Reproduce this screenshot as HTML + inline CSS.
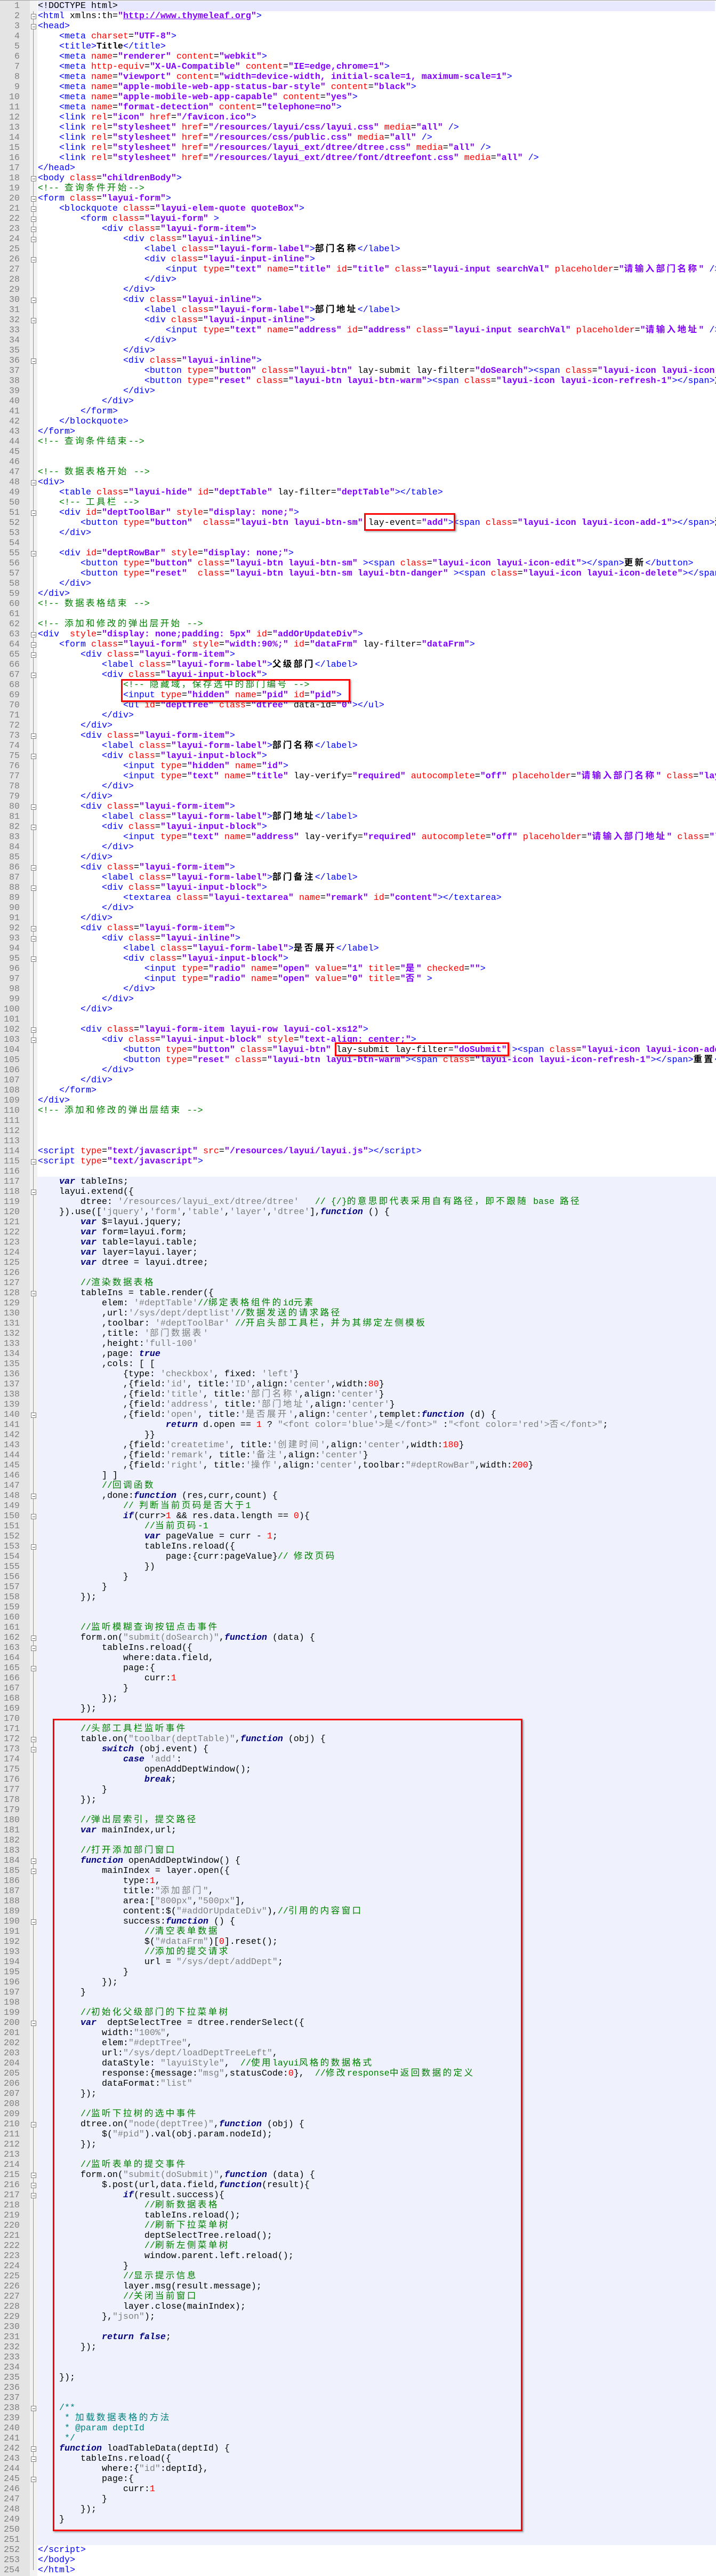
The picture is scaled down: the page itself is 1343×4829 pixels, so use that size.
<!DOCTYPE html>
<html><head><meta charset="utf-8"><style>
html,body{margin:0;padding:0;background:#fff}
body{width:1343px;height:4829px;position:relative;overflow:hidden;font-family:"Liberation Mono","Noto Sans CJK SC",monospace;font-size:16.67px}
#gut{position:absolute;left:0;top:0;width:56px;height:4829px;background:#e4e4e4}
#fold{position:absolute;left:56px;top:0;width:14px;height:4829px;background:#f2f2f2}
#topb{position:absolute;left:0;top:0;width:1343px;height:1px;background:#a0a0a0;z-index:5}
#hl{position:absolute;left:71px;top:2px;width:1270px;height:19px;background:#e8e8ff}
#jsbg{position:absolute;left:70px;top:2206px;width:1273px;height:2565px;background:#eff2fc}
#vl{position:absolute;left:62px;top:21px;width:1px;height:4797px;background:#909090}
.f{position:absolute;left:58px;width:8px;height:8px;border:1px solid #808080;background:#fff}
.f::after{content:"";position:absolute;left:2px;top:4px;width:5px;height:1px;background:#555}
#code{position:absolute;left:71px;top:2px;width:1272px;line-height:19px;color:#000;counter-reset:ln}
.l{height:19px;position:relative;counter-increment:ln;white-space:pre;overflow:visible}
.l::before{content:counter(ln);position:absolute;left:-71px;width:37px;text-align:right;color:#808080;font-weight:normal;font-style:normal}
xt{color:#0000ff}xa{color:#ff0000}xv{color:#8000ff;font-weight:bold}xc{color:#008000}
xk{color:#000080;font-weight:bold;font-style:italic}xs{color:#808080}xn{color:#ff0000}xd{color:#008080}xb{font-weight:bold}
z{letter-spacing:3.3px}
.rb{position:absolute;border:3px solid #f00;box-shadow:2px 2px 3px rgba(0,0,0,.35);box-sizing:border-box;z-index:4}
</style></head><body>
<div id="gut"></div><div id="fold"></div><div id="topb"></div><div id="hl"></div><div id="jsbg"></div><div id="vl"></div>
<div class="f" style="top:26px"></div><div class="f" style="top:45px"></div><div class="f" style="top:330px"></div><div class="f" style="top:368px"></div><div class="f" style="top:387px"></div><div class="f" style="top:406px"></div><div class="f" style="top:425px"></div><div class="f" style="top:444px"></div><div class="f" style="top:482px"></div><div class="f" style="top:558px"></div><div class="f" style="top:596px"></div><div class="f" style="top:672px"></div><div class="f" style="top:900px"></div><div class="f" style="top:957px"></div><div class="f" style="top:1033px"></div><div class="f" style="top:1185px"></div><div class="f" style="top:1204px"></div><div class="f" style="top:1223px"></div><div class="f" style="top:1261px"></div><div class="f" style="top:1375px"></div><div class="f" style="top:1413px"></div><div class="f" style="top:1508px"></div><div class="f" style="top:1546px"></div><div class="f" style="top:1622px"></div><div class="f" style="top:1660px"></div><div class="f" style="top:1736px"></div><div class="f" style="top:1755px"></div><div class="f" style="top:1793px"></div><div class="f" style="top:1926px"></div><div class="f" style="top:1945px"></div><div class="f" style="top:2173px"></div><div class="f" style="top:2230px"></div><div class="f" style="top:2420px"></div><div class="f" style="top:2648px"></div><div class="f" style="top:2800px"></div><div class="f" style="top:2838px"></div><div class="f" style="top:2895px"></div><div class="f" style="top:3066px"></div><div class="f" style="top:3085px"></div><div class="f" style="top:3123px"></div><div class="f" style="top:3256px"></div><div class="f" style="top:3275px"></div><div class="f" style="top:3484px"></div><div class="f" style="top:3503px"></div><div class="f" style="top:3598px"></div><div class="f" style="top:3788px"></div><div class="f" style="top:3978px"></div><div class="f" style="top:4073px"></div><div class="f" style="top:4092px"></div><div class="f" style="top:4111px"></div><div class="f" style="top:4510px"></div><div class="f" style="top:4586px"></div><div class="f" style="top:4605px"></div><div class="f" style="top:4643px"></div>
<div class="rb" style="left:683px;top:962px;width:171px;height:33px"></div>
<div class="rb" style="left:227px;top:1273px;width:430px;height:43px"></div>
<div class="rb" style="left:628px;top:1954px;width:327px;height:26px"></div>
<div class="rb" style="left:99px;top:3222px;width:881px;height:1523px"></div>
<div id="code"><div class="l">&lt;!DOCTYPE html&gt;</div><div class="l"><xt>&lt;html</xt> xmlns:th=<xv>"<u>http://www.thymeleaf.org</u>"</xv><xt>&gt;</xt></div><div class="l"><xt>&lt;head&gt;</xt></div><div class="l">    <xt>&lt;meta</xt> <xa>charset</xa>=<xv>"UTF-8"</xv><xt>&gt;</xt></div><div class="l">    <xt>&lt;title&gt;</xt><xb>Title</xb><xt>&lt;/title&gt;</xt></div><div class="l">    <xt>&lt;meta</xt> <xa>name</xa>=<xv>"renderer"</xv> <xa>content</xa>=<xv>"webkit"</xv><xt>&gt;</xt></div><div class="l">    <xt>&lt;meta</xt> <xa>http-equiv</xa>=<xv>"X-UA-Compatible"</xv> <xa>content</xa>=<xv>"IE=edge,chrome=1"</xv><xt>&gt;</xt></div><div class="l">    <xt>&lt;meta</xt> <xa>name</xa>=<xv>"viewport"</xv> <xa>content</xa>=<xv>"width=device-width, initial-scale=1, maximum-scale=1"</xv><xt>&gt;</xt></div><div class="l">    <xt>&lt;meta</xt> <xa>name</xa>=<xv>"apple-mobile-web-app-status-bar-style"</xv> <xa>content</xa>=<xv>"black"</xv><xt>&gt;</xt></div><div class="l">    <xt>&lt;meta</xt> <xa>name</xa>=<xv>"apple-mobile-web-app-capable"</xv> <xa>content</xa>=<xv>"yes"</xv><xt>&gt;</xt></div><div class="l">    <xt>&lt;meta</xt> <xa>name</xa>=<xv>"format-detection"</xv> <xa>content</xa>=<xv>"telephone=no"</xv><xt>&gt;</xt></div><div class="l">    <xt>&lt;link</xt> <xa>rel</xa>=<xv>"icon"</xv> <xa>href</xa>=<xv>"/favicon.ico"</xv><xt>&gt;</xt></div><div class="l">    <xt>&lt;link</xt> <xa>rel</xa>=<xv>"stylesheet"</xv> <xa>href</xa>=<xv>"/resources/layui/css/layui.css"</xv> <xa>media</xa>=<xv>"all"</xv> <xt>/&gt;</xt></div><div class="l">    <xt>&lt;link</xt> <xa>rel</xa>=<xv>"stylesheet"</xv> <xa>href</xa>=<xv>"/resources/css/public.css"</xv> <xa>media</xa>=<xv>"all"</xv> <xt>/&gt;</xt></div><div class="l">    <xt>&lt;link</xt> <xa>rel</xa>=<xv>"stylesheet"</xv> <xa>href</xa>=<xv>"/resources/layui_ext/dtree/dtree.css"</xv> <xa>media</xa>=<xv>"all"</xv> <xt>/&gt;</xt></div><div class="l">    <xt>&lt;link</xt> <xa>rel</xa>=<xv>"stylesheet"</xv> <xa>href</xa>=<xv>"/resources/layui_ext/dtree/font/dtreefont.css"</xv> <xa>media</xa>=<xv>"all"</xv> <xt>/&gt;</xt></div><div class="l"><xt>&lt;/head&gt;</xt></div><div class="l"><xt>&lt;body</xt> <xa>class</xa>=<xv>"childrenBody"</xv><xt>&gt;</xt></div><div class="l"><xc>&lt;!-- <z>查询条件开始</z>--&gt;</xc></div><div class="l"><xt>&lt;form</xt> <xa>class</xa>=<xv>"layui-form"</xv><xt>&gt;</xt></div><div class="l">    <xt>&lt;blockquote</xt> <xa>class</xa>=<xv>"layui-elem-quote quoteBox"</xv><xt>&gt;</xt></div><div class="l">        <xt>&lt;form</xt> <xa>class</xa>=<xv>"layui-form"</xv> <xt>&gt;</xt></div><div class="l">            <xt>&lt;div</xt> <xa>class</xa>=<xv>"layui-form-item"</xv><xt>&gt;</xt></div><div class="l">                <xt>&lt;div</xt> <xa>class</xa>=<xv>"layui-inline"</xv><xt>&gt;</xt></div><div class="l">                    <xt>&lt;label</xt> <xa>class</xa>=<xv>"layui-form-label"</xv><xt>&gt;</xt><xb><z>部门名称</z></xb><xt>&lt;/label&gt;</xt></div><div class="l">                    <xt>&lt;div</xt> <xa>class</xa>=<xv>"layui-input-inline"</xv><xt>&gt;</xt></div><div class="l">                        <xt>&lt;input</xt> <xa>type</xa>=<xv>"text"</xv> <xa>name</xa>=<xv>"title"</xv> <xa>id</xa>=<xv>"title"</xv> <xa>class</xa>=<xv>"layui-input searchVal"</xv> <xa>placeholder</xa>=<xv>"<z>请输入部门名称</z>"</xv> <xt>/&gt;</xt></div><div class="l">                    <xt>&lt;/div&gt;</xt></div><div class="l">                <xt>&lt;/div&gt;</xt></div><div class="l">                <xt>&lt;div</xt> <xa>class</xa>=<xv>"layui-inline"</xv><xt>&gt;</xt></div><div class="l">                    <xt>&lt;label</xt> <xa>class</xa>=<xv>"layui-form-label"</xv><xt>&gt;</xt><xb><z>部门地址</z></xb><xt>&lt;/label&gt;</xt></div><div class="l">                    <xt>&lt;div</xt> <xa>class</xa>=<xv>"layui-input-inline"</xv><xt>&gt;</xt></div><div class="l">                        <xt>&lt;input</xt> <xa>type</xa>=<xv>"text"</xv> <xa>name</xa>=<xv>"address"</xv> <xa>id</xa>=<xv>"address"</xv> <xa>class</xa>=<xv>"layui-input searchVal"</xv> <xa>placeholder</xa>=<xv>"<z>请输入地址</z>"</xv> <xt>/&gt;</xt></div><div class="l">                    <xt>&lt;/div&gt;</xt></div><div class="l">                <xt>&lt;/div&gt;</xt></div><div class="l">                <xt>&lt;div</xt> <xa>class</xa>=<xv>"layui-inline"</xv><xt>&gt;</xt></div><div class="l">                    <xt>&lt;button</xt> <xa>type</xa>=<xv>"button"</xv> <xa>class</xa>=<xv>"layui-btn"</xv> lay-submit lay-filter=<xv>"doSearch"</xv><xt>&gt;&lt;span</xt> <xa>class</xa>=<xv>"layui-icon layui-icon-search"</xv><xt>&gt;&lt;/span&gt;</xt><xb><z>查询</z></xb><xt>&lt;/button&gt;</xt></div><div class="l">                    <xt>&lt;button</xt> <xa>type</xa>=<xv>"reset"</xv> <xa>class</xa>=<xv>"layui-btn layui-btn-warm"</xv><xt>&gt;&lt;span</xt> <xa>class</xa>=<xv>"layui-icon layui-icon-refresh-1"</xv><xt>&gt;&lt;/span&gt;</xt><xb><z>重置</z></xb><xt>&lt;/button&gt;</xt></div><div class="l">                <xt>&lt;/div&gt;</xt></div><div class="l">            <xt>&lt;/div&gt;</xt></div><div class="l">        <xt>&lt;/form&gt;</xt></div><div class="l">    <xt>&lt;/blockquote&gt;</xt></div><div class="l"><xt>&lt;/form&gt;</xt></div><div class="l"><xc>&lt;!-- <z>查询条件结束</z>--&gt;</xc></div><div class="l"></div><div class="l"></div><div class="l"><xc>&lt;!-- <z>数据表格开始</z> --&gt;</xc></div><div class="l"><xt>&lt;div&gt;</xt></div><div class="l">    <xt>&lt;table</xt> <xa>class</xa>=<xv>"layui-hide"</xv> <xa>id</xa>=<xv>"deptTable"</xv> lay-filter=<xv>"deptTable"</xv><xt>&gt;&lt;/table&gt;</xt></div><div class="l">    <xc>&lt;!-- <z>工具栏</z> --&gt;</xc></div><div class="l">    <xt>&lt;div</xt> <xa>id</xa>=<xv>"deptToolBar"</xv> <xa>style</xa>=<xv>"display: none;"</xv><xt>&gt;</xt></div><div class="l">        <xt>&lt;button</xt> <xa>type</xa>=<xv>"button"</xv>  <xa>class</xa>=<xv>"layui-btn layui-btn-sm"</xv> lay-event=<xv>"add"</xv><xt>&gt;&lt;span</xt> <xa>class</xa>=<xv>"layui-icon layui-icon-add-1"</xv><xt>&gt;&lt;/span&gt;</xt><xb><z>添加</z></xb><xt>&lt;/button&gt;</xt></div><div class="l">    <xt>&lt;/div&gt;</xt></div><div class="l"></div><div class="l">    <xt>&lt;div</xt> <xa>id</xa>=<xv>"deptRowBar"</xv> <xa>style</xa>=<xv>"display: none;"</xv><xt>&gt;</xt></div><div class="l">        <xt>&lt;button</xt> <xa>type</xa>=<xv>"button"</xv> <xa>class</xa>=<xv>"layui-btn layui-btn-sm"</xv> <xt>&gt;&lt;span</xt> <xa>class</xa>=<xv>"layui-icon layui-icon-edit"</xv><xt>&gt;&lt;/span&gt;</xt><xb><z>更新</z></xb><xt>&lt;/button&gt;</xt></div><div class="l">        <xt>&lt;button</xt> <xa>type</xa>=<xv>"reset"</xv>  <xa>class</xa>=<xv>"layui-btn layui-btn-sm layui-btn-danger"</xv> <xt>&gt;&lt;span</xt> <xa>class</xa>=<xv>"layui-icon layui-icon-delete"</xv><xt>&gt;&lt;/span&gt;</xt><xb><z>删除</z></xb><xt>&lt;/button&gt;</xt></div><div class="l">    <xt>&lt;/div&gt;</xt></div><div class="l"><xt>&lt;/div&gt;</xt></div><div class="l"><xc>&lt;!-- <z>数据表格结束</z> --&gt;</xc></div><div class="l"></div><div class="l"><xc>&lt;!-- <z>添加和修改的弹出层开始</z> --&gt;</xc></div><div class="l"><xt>&lt;div</xt>  <xa>style</xa>=<xv>"display: none;padding: 5px"</xv> <xa>id</xa>=<xv>"addOrUpdateDiv"</xv><xt>&gt;</xt></div><div class="l">    <xt>&lt;form</xt> <xa>class</xa>=<xv>"layui-form"</xv> <xa>style</xa>=<xv>"width:90%;"</xv> <xa>id</xa>=<xv>"dataFrm"</xv> lay-filter=<xv>"dataFrm"</xv><xt>&gt;</xt></div><div class="l">        <xt>&lt;div</xt> <xa>class</xa>=<xv>"layui-form-item"</xv><xt>&gt;</xt></div><div class="l">            <xt>&lt;label</xt> <xa>class</xa>=<xv>"layui-form-label"</xv><xt>&gt;</xt><xb><z>父级部门</z></xb><xt>&lt;/label&gt;</xt></div><div class="l">            <xt>&lt;div</xt> <xa>class</xa>=<xv>"layui-input-block"</xv><xt>&gt;</xt></div><div class="l">                <xc>&lt;!-- <z>隐藏域，保存选中的部门编号</z> --&gt;</xc></div><div class="l">                <xt>&lt;input</xt> <xa>type</xa>=<xv>"hidden"</xv> <xa>name</xa>=<xv>"pid"</xv> <xa>id</xa>=<xv>"pid"</xv><xt>&gt;</xt></div><div class="l">                <xt>&lt;ul</xt> <xa>id</xa>=<xv>"deptTree"</xv> <xa>class</xa>=<xv>"dtree"</xv> data-id=<xv>"0"</xv><xt>&gt;&lt;/ul&gt;</xt></div><div class="l">            <xt>&lt;/div&gt;</xt></div><div class="l">        <xt>&lt;/div&gt;</xt></div><div class="l">        <xt>&lt;div</xt> <xa>class</xa>=<xv>"layui-form-item"</xv><xt>&gt;</xt></div><div class="l">            <xt>&lt;label</xt> <xa>class</xa>=<xv>"layui-form-label"</xv><xt>&gt;</xt><xb><z>部门名称</z></xb><xt>&lt;/label&gt;</xt></div><div class="l">            <xt>&lt;div</xt> <xa>class</xa>=<xv>"layui-input-block"</xv><xt>&gt;</xt></div><div class="l">                <xt>&lt;input</xt> <xa>type</xa>=<xv>"hidden"</xv> <xa>name</xa>=<xv>"id"</xv><xt>&gt;</xt></div><div class="l">                <xt>&lt;input</xt> <xa>type</xa>=<xv>"text"</xv> <xa>name</xa>=<xv>"title"</xv> lay-verify=<xv>"required"</xv> <xa>autocomplete</xa>=<xv>"off"</xv> <xa>placeholder</xa>=<xv>"<z>请输入部门名称</z>"</xv> <xa>class</xa>=<xv>"layui-input"</xv><xt>&gt;</xt></div><div class="l">            <xt>&lt;/div&gt;</xt></div><div class="l">        <xt>&lt;/div&gt;</xt></div><div class="l">        <xt>&lt;div</xt> <xa>class</xa>=<xv>"layui-form-item"</xv><xt>&gt;</xt></div><div class="l">            <xt>&lt;label</xt> <xa>class</xa>=<xv>"layui-form-label"</xv><xt>&gt;</xt><xb><z>部门地址</z></xb><xt>&lt;/label&gt;</xt></div><div class="l">            <xt>&lt;div</xt> <xa>class</xa>=<xv>"layui-input-block"</xv><xt>&gt;</xt></div><div class="l">                <xt>&lt;input</xt> <xa>type</xa>=<xv>"text"</xv> <xa>name</xa>=<xv>"address"</xv> lay-verify=<xv>"required"</xv> <xa>autocomplete</xa>=<xv>"off"</xv> <xa>placeholder</xa>=<xv>"<z>请输入部门地址</z>"</xv> <xa>class</xa>=<xv>"layui-input"</xv><xt>&gt;</xt></div><div class="l">            <xt>&lt;/div&gt;</xt></div><div class="l">        <xt>&lt;/div&gt;</xt></div><div class="l">        <xt>&lt;div</xt> <xa>class</xa>=<xv>"layui-form-item"</xv><xt>&gt;</xt></div><div class="l">            <xt>&lt;label</xt> <xa>class</xa>=<xv>"layui-form-label"</xv><xt>&gt;</xt><xb><z>部门备注</z></xb><xt>&lt;/label&gt;</xt></div><div class="l">            <xt>&lt;div</xt> <xa>class</xa>=<xv>"layui-input-block"</xv><xt>&gt;</xt></div><div class="l">                <xt>&lt;textarea</xt> <xa>class</xa>=<xv>"layui-textarea"</xv> <xa>name</xa>=<xv>"remark"</xv> <xa>id</xa>=<xv>"content"</xv><xt>&gt;&lt;/textarea&gt;</xt></div><div class="l">            <xt>&lt;/div&gt;</xt></div><div class="l">        <xt>&lt;/div&gt;</xt></div><div class="l">        <xt>&lt;div</xt> <xa>class</xa>=<xv>"layui-form-item"</xv><xt>&gt;</xt></div><div class="l">            <xt>&lt;div</xt> <xa>class</xa>=<xv>"layui-inline"</xv><xt>&gt;</xt></div><div class="l">                <xt>&lt;label</xt> <xa>class</xa>=<xv>"layui-form-label"</xv><xt>&gt;</xt><xb><z>是否展开</z></xb><xt>&lt;/label&gt;</xt></div><div class="l">                <xt>&lt;div</xt> <xa>class</xa>=<xv>"layui-input-block"</xv><xt>&gt;</xt></div><div class="l">                    <xt>&lt;input</xt> <xa>type</xa>=<xv>"radio"</xv> <xa>name</xa>=<xv>"open"</xv> <xa>value</xa>=<xv>"1"</xv> <xa>title</xa>=<xv>"<z>是</z>"</xv> <xa>checked</xa>=<xv>""</xv><xt>&gt;</xt></div><div class="l">                    <xt>&lt;input</xt> <xa>type</xa>=<xv>"radio"</xv> <xa>name</xa>=<xv>"open"</xv> <xa>value</xa>=<xv>"0"</xv> <xa>title</xa>=<xv>"<z>否</z>"</xv> <xt>&gt;</xt></div><div class="l">                <xt>&lt;/div&gt;</xt></div><div class="l">            <xt>&lt;/div&gt;</xt></div><div class="l">        <xt>&lt;/div&gt;</xt></div><div class="l"></div><div class="l">        <xt>&lt;div</xt> <xa>class</xa>=<xv>"layui-form-item layui-row layui-col-xs12"</xv><xt>&gt;</xt></div><div class="l">            <xt>&lt;div</xt> <xa>class</xa>=<xv>"layui-input-block"</xv> <xa>style</xa>=<xv>"text-align: center;"</xv><xt>&gt;</xt></div><div class="l">                <xt>&lt;button</xt> <xa>type</xa>=<xv>"button"</xv> <xa>class</xa>=<xv>"layui-btn"</xv> lay-submit lay-filter=<xv>"doSubmit"</xv> <xt>&gt;&lt;span</xt> <xa>class</xa>=<xv>"layui-icon layui-icon-add-1"</xv><xt>&gt;&lt;/span&gt;</xt><xb><z>提交</z></xb><xt>&lt;/button&gt;</xt></div><div class="l">                <xt>&lt;button</xt> <xa>type</xa>=<xv>"reset"</xv> <xa>class</xa>=<xv>"layui-btn layui-btn-warm"</xv><xt>&gt;&lt;span</xt> <xa>class</xa>=<xv>"layui-icon layui-icon-refresh-1"</xv><xt>&gt;&lt;/span&gt;</xt><xb><z>重置</z></xb><xt>&lt;/button&gt;</xt></div><div class="l">            <xt>&lt;/div&gt;</xt></div><div class="l">        <xt>&lt;/div&gt;</xt></div><div class="l">    <xt>&lt;/form&gt;</xt></div><div class="l"><xt>&lt;/div&gt;</xt></div><div class="l"><xc>&lt;!-- <z>添加和修改的弹出层结束</z> --&gt;</xc></div><div class="l"></div><div class="l"></div><div class="l"></div><div class="l"><xt>&lt;script</xt> <xa>type</xa>=<xv>"text/javascript"</xv> <xa>src</xa>=<xv>"/resources/layui/layui.js"</xv><xt>&gt;&lt;/script&gt;</xt></div><div class="l"><xt>&lt;script</xt> <xa>type</xa>=<xv>"text/javascript"</xv><xt>&gt;</xt></div><div class="l"></div><div class="l">    <xk>var</xk> tableIns;</div><div class="l">    layui.extend({</div><div class="l">        dtree: <xs>'/resources/layui_ext/dtree/dtree'</xs>   <xc>// {/}<z>的意思即代表采用自有路径，即不跟随</z> base <z>路径</z></xc></div><div class="l">    }).use([<xs>'jquery'</xs>,<xs>'form'</xs>,<xs>'table'</xs>,<xs>'layer'</xs>,<xs>'dtree'</xs>],<xk>function</xk> () {</div><div class="l">        <xk>var</xk> $=layui.jquery;</div><div class="l">        <xk>var</xk> form=layui.form;</div><div class="l">        <xk>var</xk> table=layui.table;</div><div class="l">        <xk>var</xk> layer=layui.layer;</div><div class="l">        <xk>var</xk> dtree = layui.dtree;</div><div class="l"></div><div class="l">        <xc>//<z>渲染数据表格</z></xc></div><div class="l">        tableIns = table.render({</div><div class="l">            elem: <xs>'#deptTable'</xs><xc>//<z>绑定表格组件的</z>id<z>元素</z></xc></div><div class="l">            ,url:<xs>'/sys/dept/deptlist'</xs><xc>//<z>数据发送的请求路径</z></xc></div><div class="l">            ,toolbar: <xs>'#deptToolBar'</xs> <xc>//<z>开启头部工具栏，并为其绑定左侧模板</z></xc></div><div class="l">            ,title: <xs>'<z>部门数据表</z>'</xs></div><div class="l">            ,height:<xs>'full-100'</xs></div><div class="l">            ,page: <xk>true</xk></div><div class="l">            ,cols: [ [</div><div class="l">                {type: <xs>'checkbox'</xs>, fixed: <xs>'left'</xs>}</div><div class="l">                ,{field:<xs>'id'</xs>, title:<xs>'ID'</xs>,align:<xs>'center'</xs>,width:<xn>80</xn>}</div><div class="l">                ,{field:<xs>'title'</xs>, title:<xs>'<z>部门名称</z>'</xs>,align:<xs>'center'</xs>}</div><div class="l">                ,{field:<xs>'address'</xs>, title:<xs>'<z>部门地址</z>'</xs>,align:<xs>'center'</xs>}</div><div class="l">                ,{field:<xs>'open'</xs>, title:<xs>'<z>是否展开</z>'</xs>,align:<xs>'center'</xs>,templet:<xk>function</xk> (d) {</div><div class="l">                        <xk>return</xk> d.open == <xn>1</xn> ? <xs>"&lt;font color='blue'&gt;<z>是</z>&lt;/font&gt;"</xs> :<xs>"&lt;font color='red'&gt;<z>否</z>&lt;/font&gt;"</xs>;</div><div class="l">                    }}</div><div class="l">                ,{field:<xs>'createtime'</xs>, title:<xs>'<z>创建时间</z>'</xs>,align:<xs>'center'</xs>,width:<xn>180</xn>}</div><div class="l">                ,{field:<xs>'remark'</xs>, title:<xs>'<z>备注</z>'</xs>,align:<xs>'center'</xs>}</div><div class="l">                ,{field:<xs>'right'</xs>, title:<xs>'<z>操作</z>'</xs>,align:<xs>'center'</xs>,toolbar:<xs>"#deptRowBar"</xs>,width:<xn>200</xn>}</div><div class="l">            ] ]</div><div class="l">            <xc>//<z>回调函数</z></xc></div><div class="l">            ,done:<xk>function</xk> (res,curr,count) {</div><div class="l">                <xc>// <z>判断当前页码是否大于</z>1</xc></div><div class="l">                <xk>if</xk>(curr&gt;<xn>1</xn> &amp;&amp; res.data.length == <xn>0</xn>){</div><div class="l">                    <xc>//<z>当前页码</z>-1</xc></div><div class="l">                    <xk>var</xk> pageValue = curr - <xn>1</xn>;</div><div class="l">                    tableIns.reload({</div><div class="l">                        page:{curr:pageValue}<xc>// <z>修改页码</z></xc></div><div class="l">                    })</div><div class="l">                }</div><div class="l">            }</div><div class="l">        });</div><div class="l"></div><div class="l"></div><div class="l">        <xc>//<z>监听模糊查询按钮点击事件</z></xc></div><div class="l">        form.on(<xs>"submit(doSearch)"</xs>,<xk>function</xk> (data) {</div><div class="l">            tableIns.reload({</div><div class="l">                where:data.field,</div><div class="l">                page:{</div><div class="l">                    curr:<xn>1</xn></div><div class="l">                }</div><div class="l">            });</div><div class="l">        });</div><div class="l"></div><div class="l">        <xc>//<z>头部工具栏监听事件</z></xc></div><div class="l">        table.on(<xs>"toolbar(deptTable)"</xs>,<xk>function</xk> (obj) {</div><div class="l">            <xk>switch</xk> (obj.event) {</div><div class="l">                <xk>case</xk> <xs>'add'</xs>:</div><div class="l">                    openAddDeptWindow();</div><div class="l">                    <xk>break</xk>;</div><div class="l">            }</div><div class="l">        });</div><div class="l"></div><div class="l">        <xc>//<z>弹出层索引，提交路径</z></xc></div><div class="l">        <xk>var</xk> mainIndex,url;</div><div class="l"></div><div class="l">        <xc>//<z>打开添加部门窗口</z></xc></div><div class="l">        <xk>function</xk> openAddDeptWindow() {</div><div class="l">            mainIndex = layer.open({</div><div class="l">                type:<xn>1</xn>,</div><div class="l">                title:<xs>"<z>添加部门</z>"</xs>,</div><div class="l">                area:[<xs>"800px"</xs>,<xs>"500px"</xs>],</div><div class="l">                content:$(<xs>"#addOrUpdateDiv"</xs>),<xc>//<z>引用的内容窗口</z></xc></div><div class="l">                success:<xk>function</xk> () {</div><div class="l">                    <xc>//<z>清空表单数据</z></xc></div><div class="l">                    $(<xs>"#dataFrm"</xs>)[<xn>0</xn>].reset();</div><div class="l">                    <xc>//<z>添加的提交请求</z></xc></div><div class="l">                    url = <xs>"/sys/dept/addDept"</xs>;</div><div class="l">                }</div><div class="l">            });</div><div class="l">        }</div><div class="l"></div><div class="l">        <xc>//<z>初始化父级部门的下拉菜单树</z></xc></div><div class="l">        <xk>var</xk>  deptSelectTree = dtree.renderSelect({</div><div class="l">            width:<xs>"100%"</xs>,</div><div class="l">            elem:<xs>"#deptTree"</xs>,</div><div class="l">            url:<xs>"/sys/dept/loadDeptTreeLeft"</xs>,</div><div class="l">            dataStyle: <xs>"layuiStyle"</xs>,  <xc>//<z>使用</z>layui<z>风格的数据格式</z></xc></div><div class="l">            response:{message:<xs>"msg"</xs>,statusCode:<xn>0</xn>},  <xc>//<z>修改</z>response<z>中返回数据的定义</z></xc></div><div class="l">            dataFormat:<xs>"list"</xs></div><div class="l">        });</div><div class="l"></div><div class="l">        <xc>//<z>监听下拉树的选中事件</z></xc></div><div class="l">        dtree.on(<xs>"node(deptTree)"</xs>,<xk>function</xk> (obj) {</div><div class="l">            $(<xs>"#pid"</xs>).val(obj.param.nodeId);</div><div class="l">        });</div><div class="l"></div><div class="l">        <xc>//<z>监听表单的提交事件</z></xc></div><div class="l">        form.on(<xs>"submit(doSubmit)"</xs>,<xk>function</xk> (data) {</div><div class="l">            $.post(url,data.field,<xk>function</xk>(result){</div><div class="l">                <xk>if</xk>(result.success){</div><div class="l">                    <xc>//<z>刷新数据表格</z></xc></div><div class="l">                    tableIns.reload();</div><div class="l">                    <xc>//<z>刷新下拉菜单树</z></xc></div><div class="l">                    deptSelectTree.reload();</div><div class="l">                    <xc>//<z>刷新左侧菜单树</z></xc></div><div class="l">                    window.parent.left.reload();</div><div class="l">                }</div><div class="l">                <xc>//<z>显示提示信息</z></xc></div><div class="l">                layer.msg(result.message);</div><div class="l">                <xc>//<z>关闭当前窗口</z></xc></div><div class="l">                layer.close(mainIndex);</div><div class="l">            },<xs>"json"</xs>);</div><div class="l"></div><div class="l">            <xk>return</xk> <xk>false</xk>;</div><div class="l">        });</div><div class="l"></div><div class="l"></div><div class="l">    });</div><div class="l"></div><div class="l"></div><div class="l">    <xd>/**</xd></div><div class="l">     <xd>* <z>加载数据表格的方法</z></xd></div><div class="l">     <xd>* @param deptId</xd></div><div class="l">     <xd>*/</xd></div><div class="l">    <xk>function</xk> loadTableData(deptId) {</div><div class="l">        tableIns.reload({</div><div class="l">            where:{<xs>"id"</xs>:deptId},</div><div class="l">            page:{</div><div class="l">                curr:<xn>1</xn></div><div class="l">            }</div><div class="l">        });</div><div class="l">    }</div><div class="l"></div><div class="l"></div><div class="l"><xt>&lt;/script&gt;</xt></div><div class="l"><xt>&lt;/body&gt;</xt></div><div class="l"><xt>&lt;/html&gt;</xt></div></div>
</body></html>
